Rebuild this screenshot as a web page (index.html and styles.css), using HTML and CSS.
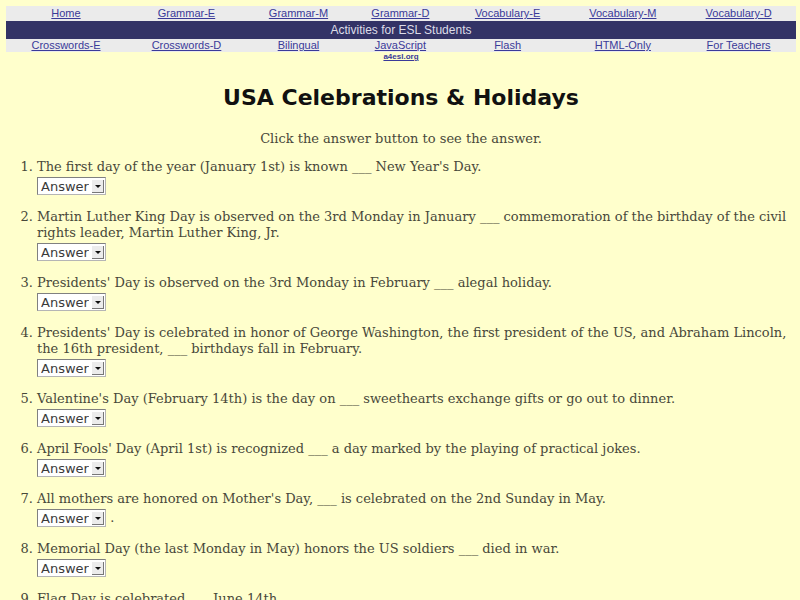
FILE: index.html
```html
<!DOCTYPE html>
<html lang="en">
<head>
    <meta charset="UTF-8">
    <title>USA Celebrations &amp; Holidays</title>
    <link rel="stylesheet" href="styles.css">
</head>
<body>
    <div class="page">
        <table class="nav">
            <tr class="links">
                <td><a href="#">Home</a></td>
                <td><a href="#">Grammar-E</a></td>
                <td><a href="#">Grammar-M</a></td>
                <td><a href="#">Grammar-D</a></td>
                <td><a href="#">Vocabulary-E</a></td>
                <td><a href="#">Vocabulary-M</a></td>
                <td><a href="#">Vocabulary-D</a></td>
            </tr>
            <tr class="banner">
                <td colspan="7">Activities for ESL Students</td>
            </tr>
            <tr class="links">
                <td><a href="#">Crosswords-E</a></td>
                <td><a href="#">Crosswords-D</a></td>
                <td><a href="#">Bilingual</a></td>
                <td><a href="#">JavaScript</a></td>
                <td><a href="#">Flash</a></td>
                <td><a href="#">HTML-Only</a></td>
                <td><a href="#">For Teachers</a></td>
            </tr>
        </table>
        <div class="site"><a href="#">a4esl.org</a></div>

        <h1>USA Celebrations &amp; Holidays</h1>
        <p class="intro">Click the answer button to see the answer.</p>

        <ol class="quiz">
            <li>The first day of the year (January 1st) is known ___ New Year's Day.
                <div class="row"><span class="answer"><select><option>Answer</option><option>in</option><option>as</option><option>for</option></select><span class="arrow"></span></span></div>
            </li>
            <li>Martin Luther King Day is observed on the 3rd Monday in January ___ commemoration of the birthday of the civil rights leader, Martin Luther King, Jr.
                <div class="row"><span class="answer"><select><option>Answer</option><option>in</option><option>as</option><option>for</option></select><span class="arrow"></span></span></div>
            </li>
            <li>Presidents' Day is observed on the 3rd Monday in February ___ alegal holiday.
                <div class="row"><span class="answer"><select><option>Answer</option><option>in</option><option>as</option><option>for</option></select><span class="arrow"></span></span></div>
            </li>
            <li>Presidents' Day is celebrated in honor of George Washington, the first president of the US, and Abraham Lincoln, the 16th president, ___ birthdays fall in February.
                <div class="row"><span class="answer"><select><option>Answer</option><option>who</option><option>whose</option><option>which</option></select><span class="arrow"></span></span></div>
            </li>
            <li>Valentine's Day (February 14th) is the day on ___ sweethearts exchange gifts or go out to dinner.
                <div class="row"><span class="answer"><select><option>Answer</option><option>who</option><option>which</option><option>that</option></select><span class="arrow"></span></span></div>
            </li>
            <li>April Fools' Day (April 1st) is recognized ___ a day marked by the playing of practical jokes.
                <div class="row"><span class="answer"><select><option>Answer</option><option>in</option><option>as</option><option>for</option></select><span class="arrow"></span></span></div>
            </li>
            <li>All mothers are honored on Mother's Day, ___ is celebrated on the 2nd Sunday in May.
                <div class="row"><span class="answer"><select><option>Answer</option><option>who</option><option>which</option><option>that</option></select><span class="arrow"></span></span> .</div>
            </li>
            <li>Memorial Day (the last Monday in May) honors the US soldiers ___ died in war.
                <div class="row"><span class="answer"><select><option>Answer</option><option>who</option><option>which</option><option>whose</option></select><span class="arrow"></span></span></div>
            </li>
            <li>Flag Day is celebrated ___ June 14th.
                <div class="row"><span class="answer"><select><option>Answer</option><option>in</option><option>on</option><option>at</option></select><span class="arrow"></span></span></div>
            </li>
        </ol>
    </div>
</body>
</html>
```
FILE: styles.css
```css
body {
    margin: 0;
    background-color: #ffffcc;
    font-family: "DejaVu Serif", serif;
    color: #48483a;
}

.page {
    padding: 6px 4px 0 6px;
}

/* top navigation table */
.nav {
    width: 100%;
    border-collapse: collapse;
    font-family: "Liberation Sans", Arial, sans-serif;
    font-size: 11px;
}
.nav td {
    text-align: center;
    padding: 0;
}
.links td {
    background-color: #ebebeb;
    height: 15px;
    line-height: 13px;
}
.links + .banner + .links td {
    height: 13px;
}
.nav a {
    color: #3a3a99;
}
.banner td {
    background-color: #333366;
    color: #dddde8;
    font-size: 12px;
    height: 18px;
}
.site {
    text-align: center;
    font-family: "Liberation Sans", Arial, sans-serif;
    font-size: 8px;
    font-weight: bold;
    line-height: 10px;
}
.site a {
    color: #3a3a99;
}

h1 {
    font-family: "DejaVu Sans", sans-serif;
    font-size: 22px;
    color: #111111;
    text-align: center;
    margin: 23px 0 0;
}
.intro {
    text-align: center;
    font-size: 13px;
    margin: 21px 0 13px;
}

/* questions */
.quiz {
    margin: 0;
    padding: 0 8px 0 31px;
    font-size: 13px;
    line-height: 16px;
}
.quiz li {
    margin-bottom: 13px;
}
.row {
    margin-top: 2px;
    height: 19px;
}
.answer {
    display: inline-flex;
    align-items: center;
    background-color: #ffffff;
    border: 1px solid #b5b5b5;
    border-top-color: #808080;
    border-left-color: #808080;
    height: 16px;
    vertical-align: middle;
}
.answer select {
    appearance: none;
    border: none;
    background: transparent;
    font-family: "DejaVu Sans", sans-serif;
    font-size: 13px;
    color: #3a3a3a;
    padding: 0 3px 0 3px;
    margin: 0;
    height: 16px;
    outline: none;
}
.arrow {
    width: 11px;
    height: 12px;
    margin-right: 1px;
    background-color: #ececec;
    border-right: 1px solid #777777;
    border-bottom: 1px solid #777777;
    position: relative;
}
.arrow::after {
    content: "";
    position: absolute;
    left: 3px;
    top: 5px;
    border-left: 3px solid transparent;
    border-right: 3px solid transparent;
    border-top: 3px solid #111111;
}
```
